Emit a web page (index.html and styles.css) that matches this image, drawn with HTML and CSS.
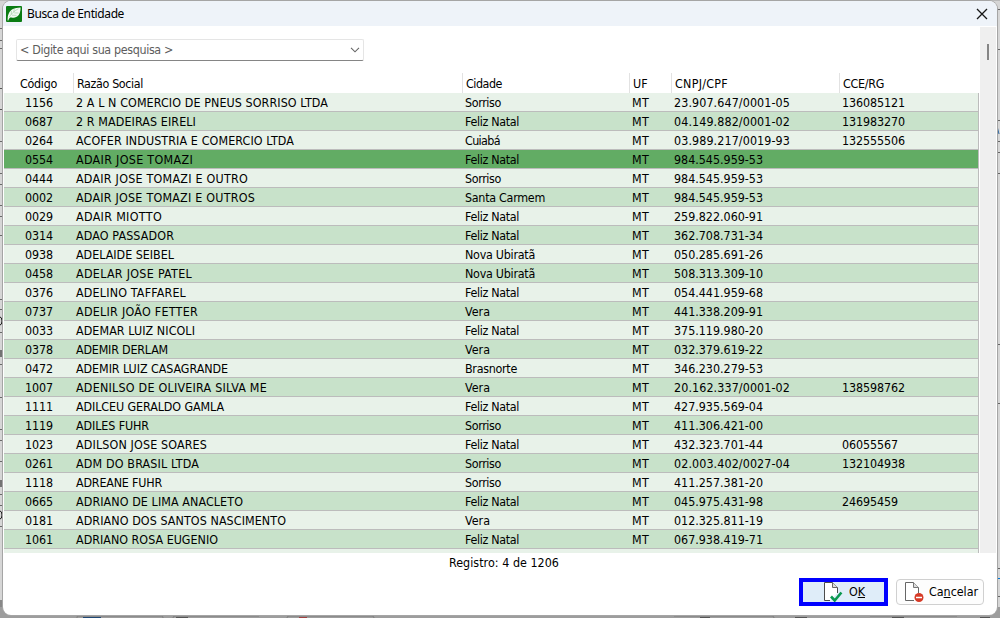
FILE: index.html
```html
<!DOCTYPE html>
<html lang="pt-BR">
<head>
<meta charset="utf-8">
<title>Busca de Entidade</title>
<link rel="stylesheet" href="styles.css">
</head>
<body>
<svg class="backdrop" viewBox="0 0 1000 618" aria-hidden="true">
  <rect width="1000" height="618" fill="#d6d6d6"/>
  <rect width="1000" height="1" fill="#b9b9b9"/>
  <path d="M95 0h66v1h-66zM173 0h95v1h-95z" fill="#858585"/>
  <path d="M0 28h3v1H0zM0 40h3v1H0zM0 48h3v1H0zM0 141h3v1H0zM0 173h3v1H0zM0 184h3v1H0zM0 205h3v1H0zM0 216h3v1H0zM0 235h3v1H0zM0 299h3v1H0zM0 309h3v1H0zM0 332h3v1H0zM0 364h3v1H0zM0 397h3v1H0zM0 429h3v1H0zM0 440h3v1H0zM0 461h3v1H0zM0 494h3v1H0zM0 505h3v1H0zM0 526h3v1H0z" fill="#696969"/>
  <path d="M0 88h3v1H0zM0 109h3v1H0z" fill="#555"/>
  <path d="M0 317q2 0 2 4t-2 4M1 350v7M1 480v7M0 511q2 0 2 4t-2 4" fill="none" stroke="#111"/>
  <rect y="600" width="3" height="7" fill="#888"/>
  <path d="M997 9h3v1h-3zM997 49h3v1h-3zM997 120h3v1h-3zM997 141h3v1h-3zM997 152h3v1h-3zM997 173h3v1h-3zM997 344h3v1h-3zM997 403h3v1h-3zM997 568h3v1h-3zM997 596h3v1h-3z" fill="#666"/>
  <path d="M997 126l2 8" stroke="#2f67a0"/>
  <rect x="997" y="578" width="3" height="1" fill="#0078d7"/>
  <rect y="607" width="1000" height="11" fill="#9d9d9d"/>
  <path d="M77 618v-1q0-1 1-1h84q1 0 1 2M173 618q0-2 2-2h84M287 618q0-2 2-2h83q2 0 2 2M674 616h98q2 0 2 2M870 616h87" fill="none" stroke="#7d7d7d"/>
  <rect x="83" y="617" width="18" height="1" fill="#1f4774"/>
  <path d="M176 617h12v1h-12zM795 617h12v1h-12zM892 617h12v1h-12zM700 617h10v1h-10zM980 617h10v1h-10z" fill="#555"/>
  <rect x="299" y="617" width="8" height="1" fill="#a04040"/>
</svg>
<main class="dialog">
  <header class="titlebar">
    <svg class="logo" viewBox="0 0 16 16"><rect width="16" height="16" rx="1" fill="#0a7c12"/><path d="M1.6 14.5C1.8 12 1.5 9.7 3 7 4.8 3.2 8 1.8 14.6 1.4c-.1 4.5-.9 7.4-3.4 9.1-2.2 1.5-5 1.3-7 1.1-1 .7-1.6 1.7-1.9 3z" fill="#f4faf3"/><path d="M3 11.4C5.3 7.8 8 5 12.5 2.7M5.2 8.7L5.5 5M7.8 6.1L8.2 3M6 9.2l4.5.2M8.2 6.9l4.3.1" fill="none" stroke="#8cc08e" stroke-width=".5"/></svg>
    <h1 class="title"><span data-w="97">Busca de Entidade</span></h1>
    <svg class="close" viewBox="0 0 12 12"><path d="M1 1l10 10M11 1L1 11" fill="none" stroke="#161616" stroke-width="1.3"/></svg>
  </header>
  <div class="body">
    <section class="content">
      <div class="search"><span data-w="153">&lt; Digite aqui sua pesquisa &gt;</span><svg class="chevron" viewBox="0 0 10 6"><path d="M1 .8l4 4 4-4" fill="none" stroke="#666" stroke-width="1.1"/></svg></div>
      <div class="head">
        <span class="cell code"><span data-w="37">Código</span></span>
        <span class="cell"><span data-w="66">Razão Social</span></span>
        <span class="cell"><span data-w="36">Cidade</span></span>
        <span class="cell"><span data-w="15">UF</span></span>
        <span class="cell"><span data-w="53">CNPJ/CPF</span></span>
        <span class="cell"><span data-w="41">CCE/RG</span></span>
      </div>
      <div class="rows" id="rows"></div>
    </section>
    <aside class="scroll"><div class="thumb"></div></aside>
  </div>
  <div class="status"><span data-w="110">Registro: 4 de 1206</span></div>
  <footer class="actions">
    <button class="button ok">
      <svg class="doc" viewBox="0 0 20 20"><path d="M7 18.5H1.5V.5h8l5 5V11" fill="#fff" stroke="#4c4c4c"/><path d="M9.5.5v5h5" fill="#ddd" stroke="#666"/><path d="M8 14.5l3.7 4 6.7-8" fill="none" stroke="#0a9850" stroke-width="2.6"/></svg>
      <span data-w="16">O<u>K</u></span>
    </button>
    <button class="button cancel">
      <svg class="doc" viewBox="0 0 20 20"><path d="M10 18.5H1.5V.5h8l5 5V11" fill="#fff" stroke="#666"/><path d="M9.5.5v5h5" fill="#ddd" stroke="#777"/><circle cx="15" cy="15.5" r="4.5" fill="#d63a26"/><path d="M12 15.5h6" stroke="#fff" stroke-width="1.7"/></svg>
      <span data-w="49">Ca<u>n</u>celar</span>
    </button>
  </footer>
</main>
<script src="app.js"></script>
</body>
</html>
```
FILE: styles.css
```css
* { box-sizing: border-box; }
body { margin: 0; width: 1000px; height: 618px; overflow: hidden; padding: 1px 3px 3px; font: 12.4px/18px "DejaVu Sans Condensed", "DejaVu Sans", sans-serif; font-stretch: condensed; color: #000; }
.backdrop { position: absolute; inset: 0; width: 1000px; height: 618px; z-index: -1; }
.dialog { width: 994px; height: 614px; background: #fff; border-radius: 8px; overflow: hidden; box-shadow: 0 0 0 1px #a5a5a5; }
.titlebar { height: 25px; display: flex; align-items: center; padding: 0 9px 0 3px; background: #eef3f9; }
.logo { width: 16px; height: 16px; }
.title { flex: 1; margin: 0 0 0 5px; font: 12px/20px "Noto Sans", "Open Sans", sans-serif; }
.close { width: 12px; height: 12px; }
.body { display: flex; justify-content: space-between; height: 527px; padding: 1px 1px 0; }
.content { width: 975px; height: 526px; overflow: hidden; }
.search { display: flex; align-items: center; justify-content: space-between; width: 348px; height: 22px; margin: 12px 0 12px 12px; padding: 0 3px; border: 1px solid #e5e5e5; border-bottom-color: #858585; border-radius: 2px; color: #5d5d5d; }
.chevron { width: 10px; height: 6px; }
.head, .row { display: grid; grid-template-columns: 69px 389px 167px 42px 168px 1fr; }
.head { height: 20px; line-height: 22px; }
.head .cell { height: 20px; padding-left: 3px; border-left: 1px solid #e2e2e2; }
.head .cell.code { padding-left: 16px; border-left: 0; }
.cell { white-space: nowrap; }
.row { height: 19px; background: #e8f2e9; border-bottom: 1px solid #bcbcbc; border-right: 1px solid #bcbcbc; line-height: 20px; }
.row .cell { padding-left: 3px; }
.row .cell:first-child { padding-left: 21px; }
.row:nth-child(even) { background: #c8e2ca; }
.row.selected { background: #62ac64; }
[data-w] { display: inline-block; white-space: nowrap; }
.scroll { width: 16px; height: 526px; background: #efefef; padding: 17px 0 0 7px; }
.thumb { width: 2px; height: 16px; background: #858585; }
.status { height: 18px; padding-left: 446px; line-height: 20px; }
.actions { display: flex; justify-content: flex-end; align-items: center; gap: 8px; padding: 7px 13px 0 0; }
.button { display: flex; align-items: center; margin: 0; font: inherit; color: #000; white-space: nowrap; }
.ok { width: 89px; height: 28px; padding: 0 0 0 20px; gap: 6px; background: #dfedf9; border: 4px solid #00f; }
.cancel { width: 88px; height: 26px; padding: 0 0 0 7px; gap: 5px; background: #fdfdfd; border: 1px solid #d0d0d0; border-radius: 4px; }
.doc { width: 20px; height: 20px; flex: none; }
u { text-decoration-thickness: 1px; text-underline-offset: 1px; }
```
FILE: app.js
```js
const cityWidths = { 'Sorriso': 36, 'Feliz Natal': 54, 'Cuiabá': 35, 'Santa Carmem': 80, 'Nova Ubiratã': 70, 'Vera': 25, 'Brasnorte': 52 };
const records = [
  ['1156', '2 A L N COMERCIO DE PNEUS SORRISO LTDA', 252, 'Sorriso', '23.907.647/0001-05', '136085121'],
  ['0687', '2 R MADEIRAS EIRELI', 120, 'Feliz Natal', '04.149.882/0001-02', '131983270'],
  ['0264', 'ACOFER INDUSTRIA E COMERCIO LTDA', 218, 'Cuiabá', '03.989.217/0019-93', '132555506'],
  ['0554', 'ADAIR JOSE TOMAZI', 117, 'Feliz Natal', '984.545.959-53', ''],
  ['0444', 'ADAIR JOSE TOMAZI E OUTRO', 172, 'Sorriso', '984.545.959-53', ''],
  ['0002', 'ADAIR JOSE TOMAZI E OUTROS', 179, 'Santa Carmem', '984.545.959-53', ''],
  ['0029', 'ADAIR MIOTTO', 86, 'Feliz Natal', '259.822.060-91', ''],
  ['0314', 'ADAO PASSADOR', 98, 'Feliz Natal', '362.708.731-34', ''],
  ['0938', 'ADELAIDE SEIBEL', 98, 'Nova Ubiratã', '050.285.691-26', ''],
  ['0458', 'ADELAR JOSE PATEL', 116, 'Nova Ubiratã', '508.313.309-10', ''],
  ['0376', 'ADELINO TAFFAREL', 110, 'Feliz Natal', '054.441.959-68', ''],
  ['0737', 'ADELIR JOÃO FETTER', 122, 'Vera', '441.338.209-91', ''],
  ['0033', 'ADEMAR LUIZ NICOLI', 119, 'Feliz Natal', '375.119.980-20', ''],
  ['0378', 'ADEMIR DERLAM', 92, 'Vera', '032.379.619-22', ''],
  ['0472', 'ADEMIR LUIZ CASAGRANDE', 152, 'Brasnorte', '346.230.279-53', ''],
  ['1007', 'ADENILSO DE OLIVEIRA SILVA ME', 191, 'Vera', '20.162.337/0001-02', '138598762'],
  ['1111', 'ADILCEU GERALDO GAMLA', 148, 'Feliz Natal', '427.935.569-04', ''],
  ['1119', 'ADILES FUHR', 73, 'Sorriso', '411.306.421-00', ''],
  ['1023', 'ADILSON JOSE SOARES', 131, 'Feliz Natal', '432.323.701-44', '06055567'],
  ['0261', 'ADM DO BRASIL LTDA', 123, 'Sorriso', '02.003.402/0027-04', '132104938'],
  ['1118', 'ADREANE FUHR', 86, 'Sorriso', '411.257.381-20', ''],
  ['0665', 'ADRIANO DE LIMA ANACLETO', 167, 'Feliz Natal', '045.975.431-98', '24695459'],
  ['0181', 'ADRIANO DOS SANTOS NASCIMENTO', 210, 'Vera', '012.325.811-19', ''],
  ['1061', 'ADRIANO ROSA EUGENIO', 142, 'Feliz Natal', '067.938.419-71', '']
];
const rows = document.getElementById('rows');

function addCell(row, text, width) {
  const cell = document.createElement('span');
  cell.className = 'cell';
  if (text) {
    const label = document.createElement('span');
    label.dataset.w = width;
    label.textContent = text;
    cell.append(label);
  }
  row.append(cell);
}

records.forEach(([code, name, nameWidth, city, doc, reg], i) => {
  const row = document.createElement('div');
  row.className = i === 3 ? 'row selected' : 'row';
  addCell(row, code, 28);
  addCell(row, name, nameWidth);
  addCell(row, city, cityWidths[city]);
  addCell(row, 'MT', 17);
  addCell(row, doc, doc.length > 14 ? 116 : 89);
  addCell(row, reg, reg.length * 7);
  rows.append(row);
});
const filler = document.createElement('div');
filler.className = 'row';
rows.append(filler);

// Distributes the spare width of each label between its letters.
document.querySelectorAll('[data-w]').forEach(label => {
  const spare = Number(label.dataset.w) - label.getBoundingClientRect().width;
  label.style.letterSpacing = spare / label.textContent.length + 'px';
});
```
